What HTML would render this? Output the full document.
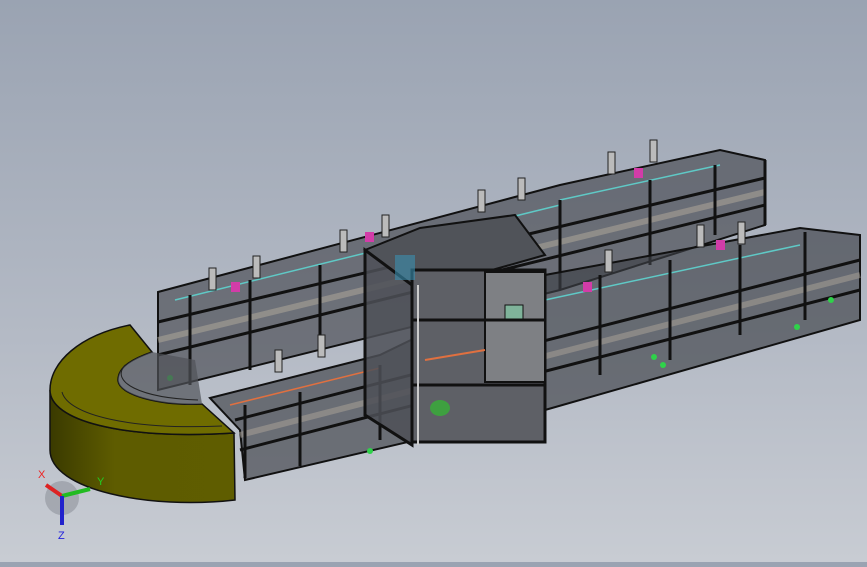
<!DOCTYPE html><html><head><style>html,body{margin:0;padding:0}body{width:867px;height:562px;overflow:hidden;background:linear-gradient(#9aa3b2,#b4bac5 60%,#c8ccd3);font-family:"Liberation Sans",sans-serif}</style></head><body>
<svg width="867" height="562" viewBox="0 0 867 562">
<defs><linearGradient id="y" x1="0" x2="1"><stop offset="0" stop-color="#3a3a00"/><stop offset=".35" stop-color="#5e5c00"/><stop offset="1" stop-color="#5f5d00"/></linearGradient></defs>
<!-- back row -->
<polygon points="158,292 560,185 720,150 765,160 765,225 560,290 158,390" fill="#3e4046" fill-opacity=".6" stroke="#111" stroke-width="2"/>
<polyline points="158,322 765,178" stroke="#111" stroke-width="3" fill="none"/>
<polyline points="158,355 765,205" stroke="#111" stroke-width="3" fill="none"/>
<polyline points="158,340 765,192" stroke="#a8a196" stroke-width="6" fill="none" opacity=".6"/>
<polyline points="175,300 560,205" stroke="#5fc9c6" stroke-width="1.5" fill="none"/>
<polyline points="560,200 720,165" stroke="#5fc9c6" stroke-width="1.5" fill="none"/>
<g stroke="#111" stroke-width="3">
<line x1="190" y1="295" x2="190" y2="385"/><line x1="250" y1="280" x2="250" y2="370"/><line x1="320" y1="265" x2="320" y2="355"/><line x1="560" y1="200" x2="560" y2="290"/><line x1="650" y1="180" x2="650" y2="265"/><line x1="715" y1="165" x2="715" y2="235"/><line x1="765" y1="160" x2="765" y2="225"/></g>
<!-- front row -->
<polygon points="210,398 380,355 545,275 800,228 860,235 860,320 545,410 245,480 240,430" fill="#3e4046" fill-opacity=".65" stroke="#111" stroke-width="2"/>
<polyline points="235,420 860,260" stroke="#111" stroke-width="3" fill="none"/>
<polyline points="240,450 860,290" stroke="#111" stroke-width="3" fill="none"/>
<polyline points="240,435 860,275" stroke="#a8a196" stroke-width="6" fill="none" opacity=".55"/>
<polyline points="230,405 380,368" stroke="#e07040" stroke-width="1.5" fill="none"/>
<polyline points="545,300 800,245" stroke="#5fc9c6" stroke-width="1.5" fill="none"/>
<g stroke="#111" stroke-width="3"><line x1="245" y1="405" x2="245" y2="478"/><line x1="300" y1="392" x2="300" y2="466"/><line x1="380" y1="365" x2="380" y2="440"/><line x1="600" y1="275" x2="600" y2="375"/><line x1="670" y1="260" x2="670" y2="360"/><line x1="740" y1="245" x2="740" y2="335"/><line x1="805" y1="232" x2="805" y2="320"/></g>
<!-- tower -->
<polygon points="365,250 420,228 515,215 545,255 485,272 412,285" fill="#505359" stroke="#111" stroke-width="2"/>
<polygon points="365,250 412,285 412,445 365,415" fill="#4d5057" fill-opacity=".85" stroke="#111" stroke-width="3"/>
<rect x="412" y="270" width="133" height="172" fill="#5e6066" stroke="#111" stroke-width="3"/>
<rect x="485" y="272" width="60" height="110" fill="#7e8084" stroke="#111" stroke-width="2"/>
<rect x="505" y="305" width="18" height="14" fill="#7fb39a" stroke="#111"/>
<line x1="412" y1="320" x2="545" y2="320" stroke="#111" stroke-width="3"/>
<line x1="412" y1="385" x2="545" y2="385" stroke="#111" stroke-width="3"/>
<line x1="418" y1="285" x2="418" y2="445" stroke="#ccc" stroke-width="2"/>
<line x1="425" y1="360" x2="485" y2="350" stroke="#e07040" stroke-width="2"/>
<ellipse cx="440" cy="408" rx="10" ry="8" fill="#3ea040"/>
<rect x="395" y="255" width="20" height="25" fill="#3b8fb0" opacity=".6"/>
<!-- columns -->
<g fill="#bbb" stroke="#222"><rect x="209" y="268" width="7" height="22"/><rect x="253" y="256" width="7" height="22"/><rect x="340" y="230" width="7" height="22"/><rect x="382" y="215" width="7" height="22"/><rect x="478" y="190" width="7" height="22"/><rect x="518" y="178" width="7" height="22"/><rect x="608" y="152" width="7" height="22"/><rect x="650" y="140" width="7" height="22"/><rect x="605" y="250" width="7" height="22"/><rect x="697" y="225" width="7" height="22"/><rect x="738" y="222" width="7" height="22"/><rect x="275" y="350" width="7" height="22"/><rect x="318" y="335" width="7" height="22"/></g>
<g fill="#d23ca8"><rect x="231" y="282" width="9" height="10"/><rect x="365" y="232" width="9" height="10"/><rect x="634" y="168" width="9" height="10"/><rect x="583" y="282" width="9" height="10"/><rect x="716" y="240" width="9" height="10"/></g>
<g fill="#2fd24a"><circle cx="170" cy="378" r="3"/><circle cx="663" cy="365" r="3"/><circle cx="654" cy="357" r="3"/><circle cx="831" cy="300" r="3"/><circle cx="797" cy="327" r="3"/><circle cx="370" cy="451" r="3"/></g>
<!-- yellow U -->
<path d="M50,390 C50,420 120,440 234,433 L235,500 C150,510 50,490 50,450 Z" fill="url(#y)" stroke="#111" stroke-width="1.5"/>
<path d="M130,325 C80,335 50,362 50,390 C50,420 120,440 234,433 L202,404 C160,406 118,395 118,380 C118,366 135,358 152,352 Z" fill="#6f6c00" stroke="#111" stroke-width="1.5"/>
<path d="M152,352 C135,358 118,366 118,380 C118,395 160,406 202,404 L195,360 Z" fill="#505258" opacity=".7"/>
<path d="M62,392 C68,415 130,430 222,426" stroke="#222" fill="none"/>
<path d="M125,365 C110,382 140,398 198,400" stroke="#222" fill="none"/>
<!-- triad -->
<circle cx="62" cy="498" r="17" fill="#8a8e98" opacity=".55"/>
<line x1="62" y1="496" x2="46" y2="485" stroke="#d22" stroke-width="4"/>
<line x1="62" y1="496" x2="90" y2="489" stroke="#2b2" stroke-width="4"/>
<line x1="62" y1="496" x2="62" y2="525" stroke="#22c" stroke-width="4"/>
<text x="38" y="478" font-size="11" fill="#e22">X</text><text x="97" y="485" font-size="11" fill="#2c2">Y</text><text x="58" y="539" font-size="11" fill="#22d">Z</text>
</svg></body></html>
